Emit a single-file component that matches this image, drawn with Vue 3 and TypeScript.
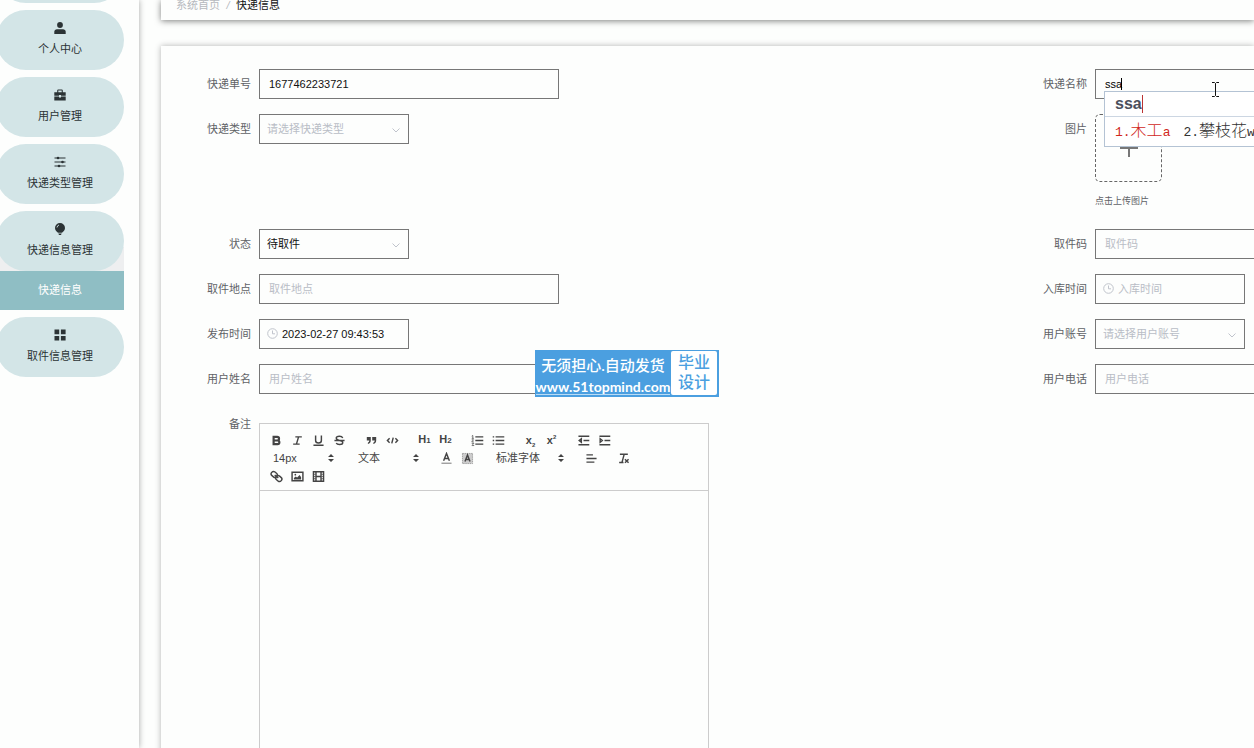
<script setup lang="ts">
import { ref } from 'vue'

interface MenuEntry {
  label: string
  icon: string
  child?: string
}

const menu: MenuEntry[] = [
  { label: '个人中心', icon: 'user' },
  { label: '用户管理', icon: 'case' },
  { label: '快递类型管理', icon: 'sliders' },
  { label: '快递信息管理', icon: 'bulb', child: '快递信息' },
  { label: '取件信息管理', icon: 'grid' },
]

const groups: string[][] = [
  ['bold', 'italic', 'underline', 'strike'],
  ['quote', 'code'],
  ['h1', 'h2'],
  ['ordered', 'bullet'],
  ['sub', 'super'],
  ['outdent', 'indent'],
]

const trackingNo = ref('1677462233721')
const parcelName = ref('ssa')
const publishedAt = ref('2023-02-27 09:43:53')
const parcelType = ref('')
const status = ref('待取件')
const account = ref('')
const place = ref('')
const pickupCode = ref('')
const storedAt = ref('')
const userName = ref('')
const phone = ref('')
</script>

<template>
  <div class="shell">
    <aside class="sidebar">
      <ul class="menu">
        <li><button class="pill" type="button" aria-label="首页"></button></li>
        <li v-for="item in menu" :key="item.label" :class="{ open: item.child }">
          <button class="pill" type="button">
            <svg class="menu-icon" viewBox="0 0 12 12" aria-hidden="true">
              <template v-if="item.icon === 'user'">
                <circle cx="6" cy="3" r="2.9" />
                <path d="M.3 12V9.800C.3 8.200 1.500 7.300 3 7.300H9C10.500 7.300 11.700 8.200 11.700 9.800V12Z" />
              </template>
              <template v-else-if="item.icon === 'case'">
                <path d="M.3 3.200h2.900V1.500Q3.200.5 4.200.5h3.600q1 0 1 1v1.700h2.900v3.600H7V6H5v.8H.3zM4.300 1.600v1.600h3.400V1.600zM.3 7.600H5v.8h2v-.8h4.700V11.500H.3z" />
              </template>
              <template v-else-if="item.icon === 'sliders'">
                <path d="M.5 1.500h11v1H.5zM.5 5.500h11v1H.5zM.5 9.500h11v1H.5z" />
                <circle cx="4" cy="2" r="1.300" /><circle cx="8.500" cy="6" r="1.300" /><circle cx="5" cy="10" r="1.300" />
              </template>
              <template v-else-if="item.icon === 'bulb'">
                <path d="M6 0a5 5 0 0 1 5 5c0 2.200-1.500 3.600-3 4.800H4C2.500 8.600 1 7.200 1 5a5 5 0 0 1 5-5zM4.300 10.400h3.400L7 12H5z" />
                <path d="M3 4.500Q3.300 2.500 5 2" fill="none" stroke="#d3e5e7" stroke-width=".9" />
              </template>
              <template v-else>
                <path d="M.5.5h4.700v4.700H.5zM6.900.5h4.700v4.700H6.900zM.5 6.900h4.700v4.700H.5zM6.900 6.900h4.700v4.700H6.900z" />
              </template>
            </svg>
            <span>{{ item.label }}</span>
          </button>
          <a v-if="item.child" class="submenu" href="#">{{ item.child }}</a>
        </li>
      </ul>
    </aside>

    <main class="main">
      <nav class="crumbs" aria-label="breadcrumb">
        <a href="#">系统首页</a><i>/</i><span>快递信息</span>
      </nav>

      <form class="panel" @submit.prevent>
        <div class="row">
          <label for="no">快递单号</label>
          <input id="no" v-model="trackingNo" class="field" type="text" />
        </div>
        <div class="row">
          <label for="name">快递名称</label>
          <div class="name-box">
            <input id="name" v-model="parcelName" class="field" type="text" />
            <span class="caret"></span>
            <div class="ime">
              <div class="ime-typed">ssa<span></span></div>
              <div class="ime-list">
                <span class="first"><b>1.</b>木工<b>a</b></span>
                <span><b>2.</b>攀枝花<b>w</b></span>
              </div>
            </div>
            <svg class="pointer" viewBox="0 0 9 15" aria-hidden="true">
              <path d="M1 .5h2.500l1 1 1-1H8M4.500 1.500v12M1 14.500h2.500l1-1 1 1H8" />
            </svg>
          </div>
        </div>

        <div class="row tall">
          <label for="type">快递类型</label>
          <div class="short">
            <select id="type" v-model="parcelType" class="field empty">
              <option value="">请选择快递类型</option>
            </select>
            <svg class="chevron" viewBox="0 0 8 8"><path d="M.5 2.500 4 6l3.500-3.500" /></svg>
          </div>
        </div>
        <div class="row tall">
          <label for="upload">图片</label>
          <div class="upload">
            <button id="upload" type="button" aria-label="上传">
              <svg viewBox="0 0 18 18"><path d="M0 9h18M9 0v18" /></svg>
            </button>
            <p>点击上传图片</p>
          </div>
        </div>

        <div class="row">
          <label for="status">状态</label>
          <div class="short">
            <select id="status" v-model="status" class="field">
              <option>待取件</option>
            </select>
            <svg class="chevron" viewBox="0 0 8 8"><path d="M.5 2.500 4 6l3.500-3.500" /></svg>
          </div>
        </div>
        <div class="row">
          <label for="code">取件码</label>
          <input id="code" v-model="pickupCode" class="field" type="text" placeholder="取件码" />
        </div>

        <div class="row">
          <label for="place">取件地点</label>
          <input id="place" v-model="place" class="field" type="text" placeholder="取件地点" />
        </div>
        <div class="row">
          <label for="stored">入库时间</label>
          <div class="short date">
            <svg class="clock" viewBox="0 0 11 11"><circle cx="5.500" cy="5.500" r="4.800" /><path d="M5.500 2.500v3.300H8" /></svg>
            <input id="stored" v-model="storedAt" class="field" type="text" placeholder="入库时间" />
          </div>
        </div>

        <div class="row">
          <label for="published">发布时间</label>
          <div class="short date">
            <svg class="clock" viewBox="0 0 11 11"><circle cx="5.500" cy="5.500" r="4.800" /><path d="M5.500 2.500v3.300H8" /></svg>
            <input id="published" v-model="publishedAt" class="field" type="text" />
          </div>
        </div>
        <div class="row">
          <label for="account">用户账号</label>
          <div class="short">
            <select id="account" v-model="account" class="field empty">
              <option value="">请选择用户账号</option>
            </select>
            <svg class="chevron" viewBox="0 0 8 8"><path d="M.5 2.500 4 6l3.500-3.500" /></svg>
          </div>
        </div>

        <div class="row">
          <label for="user">用户姓名</label>
          <input id="user" v-model="userName" class="field" type="text" placeholder="用户姓名" />
        </div>
        <div class="row">
          <label for="phone">用户电话</label>
          <input id="phone" v-model="phone" class="field" type="text" placeholder="用户电话" />
        </div>

        <div class="row">
          <label for="remark">备注</label>
          <div class="editor">
            <div class="toolbar">
              <div class="tools">
                <div v-for="(group, g) in groups" :key="g" class="group">
                  <button v-for="tool in group" :key="tool" type="button" :aria-label="tool">
                    <b v-if="tool === 'h1'" class="glyph">H<small>1</small></b>
                    <b v-else-if="tool === 'h2'" class="glyph">H<small>2</small></b>
                    <b v-else-if="tool === 'sub'" class="glyph">x<sub>2</sub></b>
                    <b v-else-if="tool === 'super'" class="glyph">x<sup>2</sup></b>
                    <svg v-else viewBox="0 0 18 18">
                      <path v-if="tool === 'bold'" class="thick" d="M5 4h5a2.500 2.500 0 0 1 0 5H5zM5 9h5.500a2.500 2.500 0 0 1 0 5H5zM3.500 4H5M3.500 14H5" />
                      <path v-else-if="tool === 'italic'" d="M6 4h9M3 14h9M10.500 4l-3 10" />
                      <path v-else-if="tool === 'underline'" d="M5 2v7q0 3.500 4 3.500t4-3.500V2M2 15.500h14" />
                      <path v-else-if="tool === 'strike'" d="M2 9h14M13.500 5.500q-1-2.500-4.500-2.500-4.500 0-4.500 2.500T9 9q4.500.5 4.500 3T9 14.500q-3.500 0-4.500-2" />
                      <path v-else-if="tool === 'quote'" class="solid" d="M2.500 4h5.500v5q0 4-4 5v-2q2-1 2-3H2.500zM10 4h5.500v5q0 4-4 5v-2q2-1 2-3H10z" />
                      <path v-else-if="tool === 'code'" d="M5 6 2 9l3 3M13 6l3 3-3 3M10 5 8 13" />
                      <template v-else-if="tool === 'ordered'">
                        <path d="M6 4h11M6 9h11M6 14h11" /><path class="thin" d="M1 3l1.500-1v4M1 6h3M1 8h2.500L1 11h3M1 13h3l-1.500 1.500L4 16H1" />
                      </template>
                      <path v-else-if="tool === 'bullet'" d="M5 4h12M5 9h12M5 14h12M1 4h2M1 9h2M1 14h2" />
                      <path v-else-if="tool === 'outdent'" d="M2 3h15M9 9h8M2 15h15M6 6.500 3 9l3 2.500z" />
                      <path v-else d="M2 3h15M9 9h8M2 15h15M3 6.500 6 9l-3 2.500z" />
                    </svg>
                  </button>
                </div>
              </div>
              <div class="tools">
                <div class="picker">
                  <select aria-label="字号"><option>14px</option></select>
                  <svg viewBox="0 0 6 8"><path d="M3 0l3 3H0zM3 8 0 5h6z" /></svg>
                </div>
                <div class="picker">
                  <select aria-label="标题"><option>文本</option></select>
                  <svg viewBox="0 0 6 8"><path d="M3 0l3 3H0zM3 8 0 5h6z" /></svg>
                </div>
                <div class="group">
                  <button type="button" aria-label="文字颜色">
                    <svg viewBox="0 0 18 18"><path d="M5 12 9 2l4 10M6.500 9h5" /><path class="thin" d="M2 15.500h14" /></svg>
                  </button>
                  <button type="button" aria-label="背景颜色">
                    <svg viewBox="0 0 18 18">
                      <path class="check" d="M2 2h14v14H2z" />
                      <path d="M5.500 13 9 4l3.500 9M7 10.500h4" />
                    </svg>
                  </button>
                </div>
                <div class="picker wide">
                  <select aria-label="字体"><option>标准字体</option></select>
                  <svg viewBox="0 0 6 8"><path d="M3 0l3 3H0zM3 8 0 5h6z" /></svg>
                </div>
                <div class="group">
                  <button type="button" aria-label="对齐">
                    <svg viewBox="0 0 18 18"><path d="M2 4h9M2 9h14M2 14h11" /></svg>
                  </button>
                </div>
                <div class="group">
                  <button type="button" aria-label="清除格式">
                    <svg viewBox="0 0 18 18"><path d="M4 3h11M10 3 7 14M3 14.500h6M11 10l5 5M16 10l-5 5" /></svg>
                  </button>
                </div>
              </div>
              <div class="tools">
                <div class="group">
                  <button type="button" aria-label="链接">
                    <svg viewBox="0 0 18 18"><rect x="1.500" y="3" width="9" height="6.500" rx="3.200" transform="rotate(40 6 6)" /><rect x="7.500" y="8.500" width="9" height="6.500" rx="3.200" transform="rotate(40 12 12)" /><path d="M6.500 7l5 4" /></svg>
                  </button>
                  <button type="button" aria-label="图片">
                    <svg viewBox="0 0 18 18"><path d="M1.500 3h15v12h-15z" /><path class="solid" d="M4 13v-2l2.500-2 2 1.500L12 7l2 3v3z" /><circle class="solid" cx="6" cy="6.500" r="1.200" /></svg>
                  </button>
                  <button type="button" aria-label="视频">
                    <svg viewBox="0 0 18 18"><path d="M2 2.500h14v13H2zM5.500 3v12M12.500 3v12M5.500 9h7" /><path class="thin" d="M2 6h3M2 9h3M2 12h3M13 6h3M13 9h3M13 12h3" /></svg>
                  </button>
                </div>
              </div>
            </div>
            <textarea id="remark"></textarea>
          </div>
        </div>
      </form>
    </main>

    <div class="badge">
      <div class="badge-text">
        <strong>无须担心.自动发货</strong>
        <a href="#">www.51topmind.com</a>
      </div>
      <div class="badge-side">毕业<br />设计</div>
    </div>
  </div>
</template>

<style>
body {
  margin: 0;
  overflow: hidden;
}
</style>

<style scoped>
* {
  box-sizing: border-box;
}
.shell {
  position: relative;
  display: flex;
  gap: 22px;
  height: 100vh;
  overflow: hidden;
  background: #fdfefd;
  font-family: "Liberation Sans", "Noto Sans CJK SC", sans-serif;
  font-size: 11px;
  color: #606266;
}
button,
input,
select,
textarea {
  font: inherit;
  color: inherit;
  border: 0;
  margin: 0;
  padding: 0;
  background: none;
  outline: none;
}
select {
  appearance: none;
}
a {
  color: inherit;
  text-decoration: none;
}

.sidebar {
  flex: 0 0 139px;
  box-shadow: 0 0 6px rgba(0, 0, 0, 0.35);
}
.menu {
  display: flex;
  flex-direction: column;
  gap: 7px;
  list-style: none;
  margin: -57px 15px 0 -4px;
  padding: 0;
}
.pill {
  display: flex;
  flex-direction: column;
  align-items: center;
  gap: 7px;
  width: 100%;
  height: 60px;
  padding-top: 12px;
  border-radius: 30px;
  background: #d3e5e7;
  color: #2b3335;
  line-height: 16px;
}
.menu-icon {
  width: 12px;
  height: 12px;
  fill: #2b3335;
}
.open {
  background: linear-gradient(transparent 36px, #eeeff0 36px);
}
.submenu {
  display: block;
  background: #8fbec4;
  color: #fff;
  line-height: 38px;
  height: 39px;
  text-align: center;
}

.main {
  flex: 1;
  min-width: 0;
  display: flex;
  flex-direction: column;
  gap: 26px;
}
.crumbs {
  flex: none;
  display: flex;
  height: 20px;
  padding-left: 15px;
  line-height: 10px;
  color: #b6b9be;
  box-shadow: 0 1px 6px rgba(0, 0, 0, 0.5);
}
.crumbs i {
  width: 16px;
  text-align: center;
}
.crumbs span {
  color: #111;
}
.panel {
  flex: none;
  display: grid;
  grid-template-columns: minmax(836px, 76%) minmax(398px, 1fr);
  align-content: start;
  row-gap: 15px;
  padding-top: 23px;
  box-shadow: 0 0 6px rgba(0, 0, 0, 0.3);
}
.row {
  display: flex;
  align-items: flex-start;
  gap: 8px;
  min-height: 30px;
}
.tall {
  min-height: 100px;
}
.row > label {
  flex: 0 0 90px;
  text-align: right;
  line-height: 30px;
}
.field {
  display: block;
  width: 300px;
  height: 30px;
  padding: 0 9px;
  border: 1px solid #777;
  color: #111;
}
.field::placeholder {
  color: #b9bdc6;
}
.short {
  position: relative;
  width: 150px;
}
.short .field {
  width: 100%;
  padding: 0 7px;
}
.short .empty {
  color: #b9bdc6;
}
.date .field {
  padding-left: 22px;
}
.chevron {
  position: absolute;
  right: 9px;
  top: 12px;
  width: 8px;
  height: 8px;
  fill: none;
  stroke: #c0c4cc;
}
.clock {
  position: absolute;
  left: 8px;
  top: 9px;
  width: 11px;
  height: 11px;
  fill: none;
  stroke: #c0c4cc;
}

.name-box {
  position: relative;
}
.name-box .field {
  color: #000;
}
.caret {
  position: absolute;
  left: 26px;
  top: 9px;
  width: 1px;
  height: 12px;
  background: #000;
}
.ime {
  position: absolute;
  z-index: 2;
  left: 9px;
  top: 22px;
  width: 320px;
  border: 1px solid #b4c3d4;
  background: #fff;
}
.ime-typed {
  display: flex;
  align-items: center;
  height: 25px;
  padding-left: 10px;
  border-bottom: 1px solid #ccd6e2;
  font-size: 16px;
  font-weight: bold;
  color: #4c4f5c;
}
.ime-typed span {
  width: 1px;
  height: 18px;
  background: #b33;
}
.ime-list {
  display: flex;
  gap: 13px;
  padding-left: 10px;
  font-size: 16px;
  font-weight: 300;
  line-height: 28px;
  height: 29px;
  color: #333;
  white-space: nowrap;
}
.ime-list b {
  font-family: "Liberation Mono", monospace;
  font-size: 13px;
  font-weight: normal;
}
.ime-list .first {
  color: #d1281c;
}
.pointer {
  position: absolute;
  z-index: 3;
  left: 116px;
  top: 13px;
  width: 9px;
  height: 15px;
  fill: none;
  stroke: #111;
}
.upload button {
  display: flex;
  align-items: center;
  justify-content: center;
  width: 67px;
  height: 68px;
  border: 1px dashed #666;
  border-radius: 5px;
}
.upload svg {
  width: 18px;
  height: 18px;
  stroke: #777;
  stroke-width: 2;
}
.upload p {
  margin: 12px 0 0;
  font-size: 9px;
  line-height: 14px;
}

.editor {
  width: 450px;
  margin-top: 14px;
  border: 1px solid #ccc;
  color: #444;
}
.toolbar {
  padding: 7px 6px 5px;
  border-bottom: 1px solid #ccc;
}
.tools {
  display: flex;
  gap: 11px;
  height: 18px;
}
.group {
  display: flex;
}
.group button {
  display: flex;
  align-items: center;
  justify-content: center;
  width: 21px;
  height: 18px;
}
.group svg {
  width: 13px;
  height: 13px;
  fill: none;
  stroke: #444;
  stroke-width: 2;
}
.group .solid {
  fill: #444;
  stroke: none;
}
.group .thick {
  stroke-width: 3;
}
.group .thin {
  stroke-width: 1;
}
.group .check {
  stroke: #888;
  stroke-width: 1;
  stroke-dasharray: 2 1;
  fill: #ccc;
}
.glyph {
  line-height: 18px;
}
.glyph small {
  font-size: 8px;
}
.glyph sub,
.glyph sup {
  font-size: 6px;
  line-height: 0;
}
.picker {
  position: relative;
  width: 74px;
}
.picker.wide {
  width: 81px;
}
.picker select {
  width: 100%;
  height: 18px;
  padding-left: 7px;
}
.picker svg {
  position: absolute;
  right: 6px;
  top: 5px;
  width: 6px;
  height: 8px;
  fill: #444;
}
textarea {
  display: block;
  width: 100%;
  height: 300px;
  resize: none;
}

.badge {
  position: absolute;
  z-index: 4;
  left: 535px;
  top: 350px;
  display: flex;
  width: 184px;
  height: 47px;
  padding: 1px 2px 2px 0;
  background: #4b9fe0;
}
.badge-text {
  flex: 1;
  display: flex;
  flex-direction: column;
  align-items: center;
  color: #fff;
  font-family: Lato, "Noto Sans CJK SC", sans-serif;
  white-space: nowrap;
}
.badge-text strong {
  font-size: 15px;
  font-weight: 500;
  line-height: 28px;
}
.badge-text a {
  font-size: 14px;
  font-weight: bold;
  line-height: 15px;
  border-bottom: 1px solid #b9dcf6;
}
.badge-side {
  flex: 0 0 46px;
  border-radius: 2px;
  background: #fff;
  color: #4b9fe0;
  font-size: 16px;
  font-weight: 500;
  line-height: 20px;
  padding-top: 2px;
  text-align: center;
}
</style>
